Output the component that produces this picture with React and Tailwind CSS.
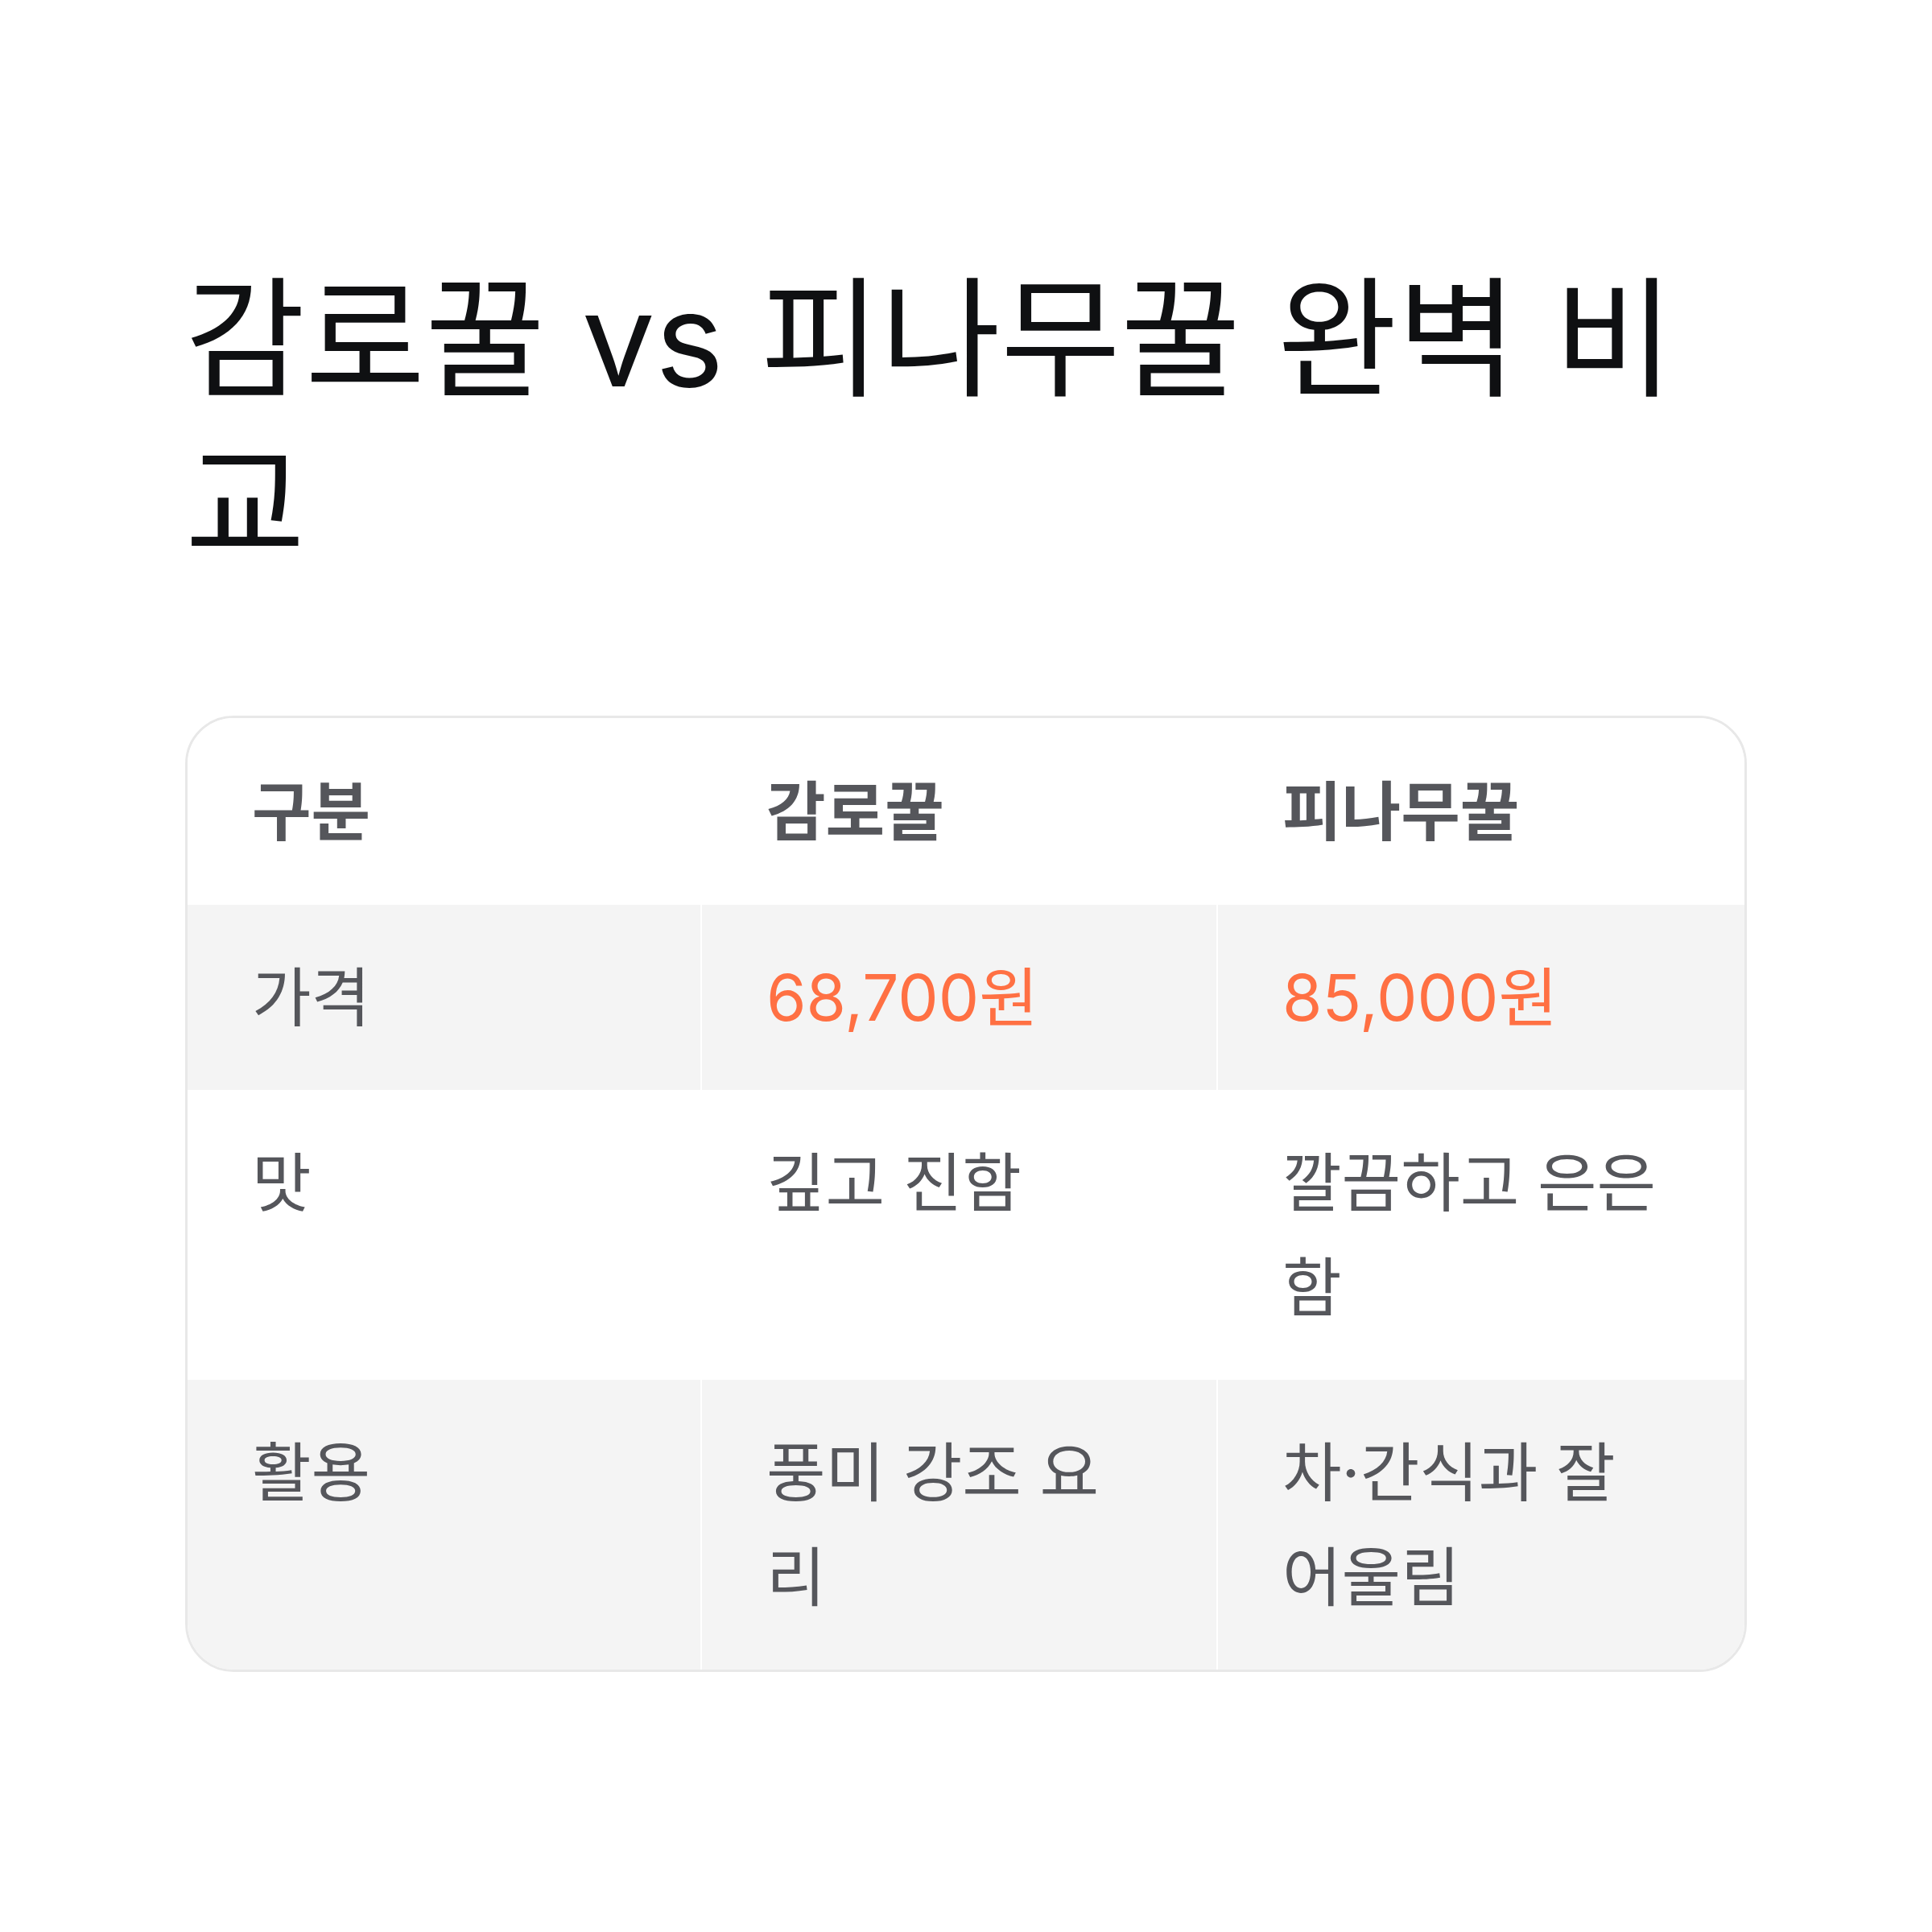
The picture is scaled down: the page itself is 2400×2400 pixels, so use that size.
import React from "react";

const rows = [
  { label: "가격", a: "68,700원", b: "85,000원", price: true, gray: true },
  { label: "맛", a: "깊고 진함", b: "깔끔하고 은은함", gray: false },
  { label: "활용", a: "풍미 강조 요리", b: "차·간식과 잘 어울림", gray: true },
];

export default function App() {
  const font = { fontFamily: 'Inter, "Noto Sans CJK KR", sans-serif' };
  return (
    <div className="w-[2400px] h-[2400px] bg-white px-[230px] pt-[318px]" style={font}>
      <h1 className="text-[162px] leading-[206px] font-normal text-[#0f1012]">
        감로꿀 vs 피나무꿀 완벽 비교
      </h1>
      <div className="mt-[159px] w-[1940px] border-[3px] border-[#e8e8e8] rounded-[60px] overflow-hidden">
        <div className="grid grid-cols-[637px_641px_1fr] bg-white">
          <div className="px-[80px] py-[51px] text-[80px] leading-[130px] font-bold text-[#55565b]">구분</div>
          <div className="px-[80px] py-[51px] text-[80px] leading-[130px] font-bold text-[#55565b] border-l-2 border-white">감로꿀</div>
          <div className="px-[80px] py-[51px] text-[80px] leading-[130px] font-bold text-[#55565b] border-l-2 border-white">피나무꿀</div>
        </div>
        {rows.map((r, i) => (
          <div
            key={i}
            className={"grid grid-cols-[637px_641px_1fr] " + (r.gray ? "bg-[#f4f4f4]" : "bg-white")}
          >
            <div className="px-[80px] py-[50px] text-[80px] leading-[130px] text-[#55565b]">{r.label}</div>
            <div
              className={
                "px-[80px] py-[50px] text-[80px] leading-[130px] border-l-2 border-white " +
                (r.price ? "text-[#ff7043]" : "text-[#55565b]")
              }
            >
              {r.a}
            </div>
            <div
              className={
                "px-[80px] py-[50px] text-[80px] leading-[130px] border-l-2 border-white " +
                (r.price ? "text-[#ff7043]" : "text-[#55565b]")
              }
            >
              {r.b}
            </div>
          </div>
        ))}
      </div>
    </div>
  );
}
